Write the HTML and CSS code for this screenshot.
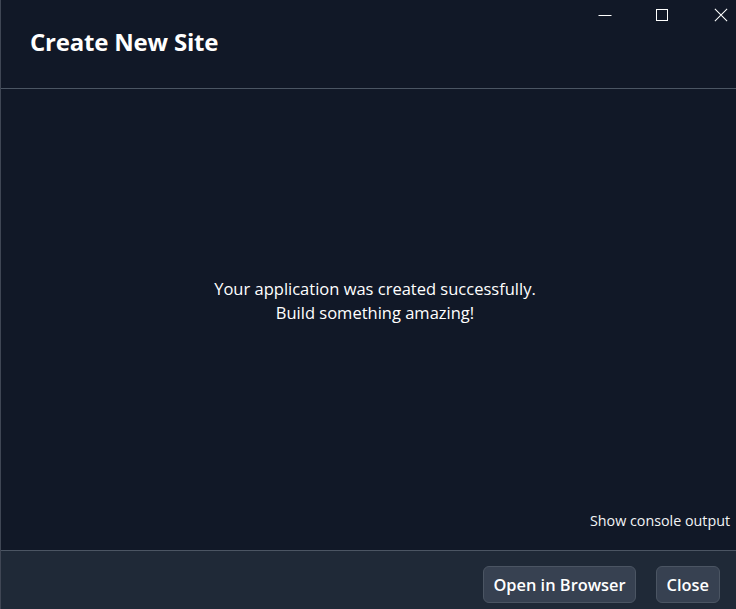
FILE: index.html
```html
<!DOCTYPE html>
<html>
<head>
<meta charset="utf-8">
<link rel="stylesheet" href="styles.css">
</head>
<body>
<div class="window">
  <header class="header">
    <h1 class="title">Create New Site</h1>
    <div class="controls">
      <span class="ctl ctl-min">
        <svg width="14" height="14" viewBox="0 0 14 14"><path d="M0.5 7.5h13" stroke="#fff" stroke-width="1"/></svg>
      </span>
      <span class="ctl ctl-max">
        <svg width="14" height="14" viewBox="0 0 14 14"><rect x="0.5" y="1.5" width="11" height="11" fill="none" stroke="#fff" stroke-width="1"/></svg>
      </span>
      <span class="ctl ctl-close">
        <svg width="16" height="16" viewBox="0 0 16 16"><path d="M1 1L15 15M15 1L1 15" stroke="#fff" stroke-width="1.2"/></svg>
      </span>
    </div>
  </header>
  <main class="main">
    <div class="message">
      <p>Your application was created successfully.</p>
      <p>Build something amazing!</p>
    </div>
    <div class="console-row">
      <span class="console-link">Show console output</span>
    </div>
  </main>
  <footer class="footer">
    <button class="btn btn-open">Open in Browser</button>
    <button class="btn">Close</button>
  </footer>
</div>
</body>
</html>
```
FILE: styles.css
```css
* { box-sizing: border-box; }
html, body {
  margin: 0;
  padding: 0;
  background: #111827;
}
body {
  font-family: "Open Sans", "Noto Sans", sans-serif;
  color: #ffffff;
}
.window {
  width: 736px;
  height: 609px;
  display: flex;
  flex-direction: column;
  border-left: 1px solid #3f4654;
  background: #111827;
}
.header {
  height: 89px;
  flex: none;
  border-bottom: 1px solid #4b5563;
  position: relative;
  padding: 25px 0 0 29px;
}
.title {
  margin: 0;
  font-size: 24px;
  font-weight: 700;
  line-height: 34px;
  letter-spacing: -0.2px;
}
.controls {
  position: absolute;
  top: 8px;
  right: 8px;
  display: flex;
  align-items: center;
}
.ctl {
  display: flex;
  width: 14px;
  height: 14px;
  align-items: center;
  justify-content: center;
}
.ctl-max { margin-left: 44px; }
.ctl-close { margin-left: 44px; }
.ctl svg { display: block; }
.main {
  flex: 1;
  display: flex;
  flex-direction: column;
}
.message {
  flex: 1;
  display: flex;
  flex-direction: column;
  align-items: center;
  justify-content: center;
  font-size: 16.5px;
  line-height: 24px;
  padding: 2px 0 0 13px;
}
.message p { margin: 0; }
.console-row {
  display: flex;
  justify-content: flex-end;
  padding: 0 6px 18px 0;
}
.console-link {
  font-size: 14.3px;
  line-height: 22px;
  color: #f3f4f6;
}
.footer {
  height: 59px;
  flex: none;
  background: #1f2937;
  border-top: 1px solid #4b5563;
  display: flex;
  justify-content: flex-end;
  align-items: flex-start;
  gap: 20px;
  padding: 15px 16px 0 0;
}
.btn {
  font-family: "Open Sans", "Noto Sans", sans-serif;
  font-size: 16.4px;
  font-weight: 600;
  color: #ffffff;
  background: #374151;
  border: 1px solid #4b5563;
  border-radius: 6px;
  height: 37px;
  padding: 0 10px;
  line-height: 35px;
}
.btn-open { padding: 0 9px; }
```
